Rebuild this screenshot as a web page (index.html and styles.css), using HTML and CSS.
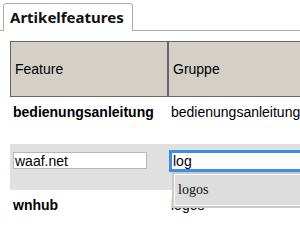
FILE: index.html
```html
<!DOCTYPE html>
<html>
<head>
<meta charset="utf-8">
<link rel="stylesheet" href="styles.css">
</head>
<body>
<div class="tabs"><div class="tab">Artikelfeatures</div></div>
<div class="wrap">
<table class="grid">
  <thead>
    <tr><th class="c1">Feature</th><th>Gruppe</th></tr>
  </thead>
  <tbody>
    <tr class="r1"><td class="name">bedienungsanleitung</td><td>bedienungsanleitung</td></tr>
    <tr class="edit">
      <td><input class="inp" type="text" value="waaf.net"></td>
      <td>
        <div class="ac">
          <input class="inp inp2 focus" type="text" value="log">
          <div class="menu"><div class="item">logos</div></div>
        </div>
      </td>
    </tr>
    <tr class="r3"><td class="name">wnhub</td><td>logos</td></tr>
  </tbody>
</table>
</div>
</body>
</html>
```

FILE: styles.css
```css
html, body {
  margin: 0;
  padding: 0;
  overflow: hidden;
  background: #fff;
}
body {
  font-family: "Liberation Sans", Arial, sans-serif;
  font-size: 14px;
  color: #000;
  width: 300px;
  height: 240px;
}
.tabs {
  padding: 3px 0 0 3px;
  height: 27px;
  border-bottom: 1px solid #aaa;
  display: flex;
}
.tab {
  box-sizing: border-box;
  width: 130px;
  height: 28px;
  margin-bottom: -1px;
  border: 1px solid #aaa;
  border-bottom: none;
  border-radius: 4px 4px 0 0;
  background: #fff;
  padding-left: 6px;
  font-family: "Noto Sans", sans-serif;
  font-weight: bold;
  font-size: 15px;
  line-height: 26px;
  color: #111;
}
.wrap {
  margin: 10px 0 0 10px;
  width: 290px;
  height: 199px;
  overflow: hidden;
}
.grid {
  border-collapse: separate;
  border-spacing: 0;
  width: 380px;
  table-layout: fixed;
}
.grid th {
  box-sizing: border-box;
  height: 56px;
  background: #d4d0c8;
  border: 1px solid #666;
  padding: 0 4px;
  text-align: left;
  font-weight: normal;
  vertical-align: middle;
}
.grid th.c1 {
  width: 158px;
}
.grid td {
  box-sizing: border-box;
  padding: 7px 3px 0 3px;
  vertical-align: top;
  white-space: nowrap;
}
.r1 td { height: 47px; }
.r3 td { height: 46px; }
.edit td {
  height: 46px;
  background: #e0e0e0;
  padding-top: 8px;
}
.name {
  font-weight: bold;
}
.inp {
  box-sizing: border-box;
  width: 134px;
  height: 17px;
  margin: 0;
  padding: 0 1px;
  border: 1px solid #b8b8b8;
  background: #fff;
  font-family: "Liberation Sans", Arial, sans-serif;
  font-size: 14px;
  color: #000;
  display: block;
}
.ac {
  position: relative;
}
.inp2 {
  width: 200px;
}
.focus {
  outline: 2px solid #3d8de6;
  outline-offset: 0;
  border-color: #3d8de6;
  height: 18px;
}
.menu {
  position: absolute;
  left: 1px;
  top: 20px;
  width: 200px;
  box-sizing: border-box;
  height: 36px;
  border: 2px solid #c9c9c9;
  background: #dcdcdc;
  box-shadow: inset 0 0 0 1px #fff;
}
.item {
  font-family: "Liberation Serif", "Times New Roman", serif;
  font-size: 14px;
  line-height: 32px;
  padding-left: 4px;
  color: #111;
}
```
